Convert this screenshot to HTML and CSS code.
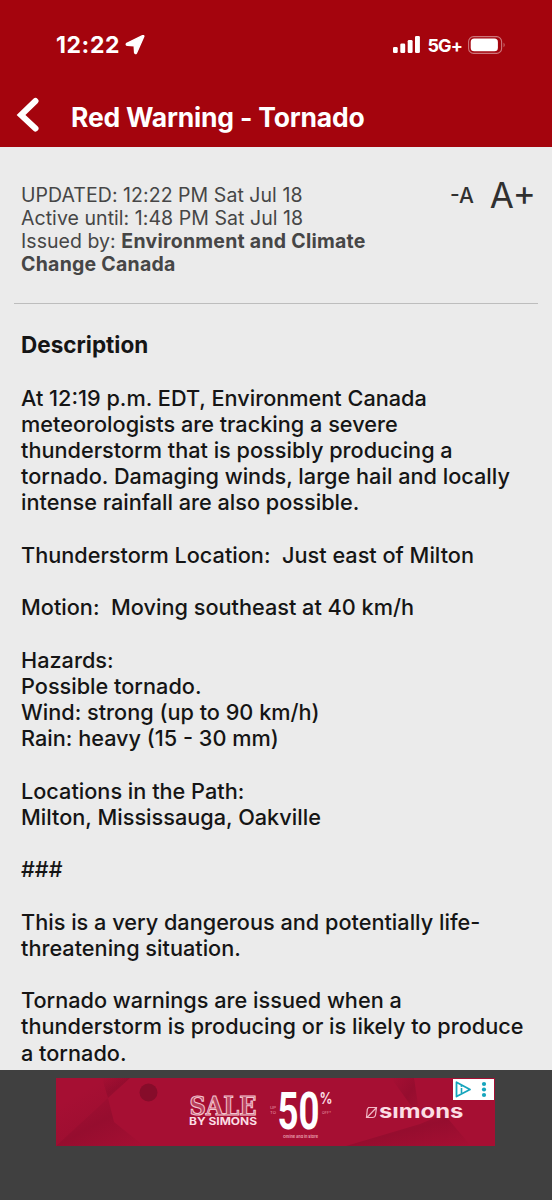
FILE: index.html
```
<!DOCTYPE html>
<html lang="en">
<head>
    <meta charset="UTF-8">
    <meta name="viewport" content="width=device-width, initial-scale=1.0">
    <title>Red Warning - Tornado</title>
    <link rel="stylesheet" href="styles.css">
</head>
<body>

<header>
    <div class="status-bar">
        <span class="time">12:22</span>
        <svg class="location" width="20" height="20" viewBox="0 0 20 20">
            <path d="M18.8 1.4 L11.5 18 Q10.2 19.5 9.6 17.5 L9.2 10.8 L2.2 10.4 Q.5 9.7 1.8 8.3 L17.5 .7 Q19 .2 18.8 1.4 Z" fill="#fff" stroke="#fff" stroke-width="1.4" stroke-linejoin="round"/>
        </svg>
        <svg class="signal" width="28" height="18" viewBox="0 0 28 18" fill="#fff">
            <rect x="0" y="11" width="4.7" height="6" rx="1.3"/>
            <rect x="7.3" y="7.5" width="4.9" height="9.5" rx="1.3"/>
            <rect x="14.7" y="4" width="4.9" height="13" rx="1.3"/>
            <rect x="22" y="0" width="4.9" height="17" rx="1.3"/>
        </svg>
        <span class="network">5G+</span>
        <svg class="battery" width="38" height="18" viewBox="0 0 38 18">
            <rect x=".6" y=".6" width="33" height="16.8" rx="5" fill="none" stroke="#fff" stroke-opacity=".45" stroke-width="1.1"/>
            <rect x="2.7" y="2.6" width="27.2" height="12.6" rx="3.5" fill="#fff"/>
            <path d="M35.6 6.5 Q37.6 9 35.6 11.3 Z" fill="#fff" fill-opacity=".5"/>
        </svg>
    </div>
    <div class="title-bar">
        <svg class="back" width="24" height="36" viewBox="0 0 24 36">
            <path d="M19.5 4 L5 18 L19.5 31.5" fill="none" stroke="#fff" stroke-width="6" stroke-linecap="round" stroke-linejoin="miter"/>
        </svg>
        <h1>Red Warning - Tornado</h1>
    </div>
</header>

<main>
    <div class="info">
        <p class="issued">
            UPDATED: 12:22 PM Sat Jul 18<br>
            Active until: 1:48 PM Sat Jul 18<br>
            Issued by: <b>Environment and Climate<br>Change Canada</b>
        </p>
        <div class="text-size">
            <span class="smaller">-A</span>
            <span class="larger">A+</span>
        </div>
    </div>

    <div class="description">
        <h2>Description</h2>
        <p>At 12:19 p.m. EDT, Environment Canada<br>
        meteorologists are tracking a severe<br>
        thunderstorm that is possibly producing a<br>
        tornado. Damaging winds, large hail and locally<br>
        intense rainfall are also possible.</p>
        <p>Thunderstorm Location:&nbsp; Just east of Milton</p>
        <p>Motion:&nbsp; Moving southeast at 40 km/h</p>
        <p>Hazards:<br>
        Possible tornado.<br>
        Wind: strong (up to 90 km/h)<br>
        Rain: heavy (15 - 30 mm)</p>
        <p>Locations in the Path:<br>
        Milton, Mississauga, Oakville</p>
        <p>###</p>
        <p>This is a very dangerous and potentially life-<br>
        threatening situation.</p>
        <p>Tornado warnings are issued when a<br>
        thunderstorm is producing or is likely to produce<br>
        a tornado.</p>
    </div>
</main>

<footer>
    <div class="ad">
        <svg width="439" height="68" viewBox="0 0 439 68">
            <defs>
                <linearGradient id="fold" x1="0" y1="0" x2="1" y2="1">
                    <stop offset="0" stop-color="#7d0a28" stop-opacity="0"/>
                    <stop offset=".5" stop-color="#7d0a28" stop-opacity=".4"/>
                    <stop offset="1" stop-color="#7d0a28" stop-opacity="0"/>
                </linearGradient>
                <linearGradient id="corner" x1="0" y1="0" x2=".6" y2="1">
                    <stop offset=".3" stop-color="#7d0a28" stop-opacity="0"/>
                    <stop offset="1" stop-color="#7d0a28" stop-opacity=".3"/>
                </linearGradient>
            </defs>
            <rect width="439" height="68" fill="#a60f33"/>
            <path d="M0 0 H74 L52 20 L0 68 Z" fill="url(#corner)"/>
            <path d="M46 0 H74 L52 20 Z" fill="url(#fold)"/>
            <path d="M0 68 L52 20 L58 44 L88 68 Z" fill="url(#fold)"/>
            <circle cx="92.5" cy="14.5" r="9" fill="#860c2a"/>
            <path d="M335 0 H358 L364 40 Z" fill="url(#fold)"/>
            <path d="M290 68 L364 46 L388 36 L415 68 Z" fill="url(#fold)"/>
            <g font-family="Inter, sans-serif" fill="#fbdde4">
                <text x="133.5" y="37" font-family="'DejaVu Serif', serif" font-weight="700" font-size="25.5" textLength="67" lengthAdjust="spacingAndGlyphs" fill="#b8405c" stroke="#f3c3ce" stroke-width="1.1">SALE</text>
                <text x="133" y="47" font-size="10.5" font-weight="700" textLength="68" lengthAdjust="spacingAndGlyphs">BY SIMONS</text>
                <g font-size="4" fill="#e79aac">
                    <text x="214" y="31" textLength="6" lengthAdjust="spacingAndGlyphs">UP</text>
                    <text x="214" y="35.5" textLength="6" lengthAdjust="spacingAndGlyphs">TO</text>
                    <text x="266" y="36" textLength="9" lengthAdjust="spacingAndGlyphs">OFF*</text>
                    <text x="227" y="59.5" font-weight="700" textLength="35" lengthAdjust="spacingAndGlyphs">Online and in store</text>
                </g>
                <text x="221.5" y="50.5" font-family="Roboto, sans-serif" font-weight="700" font-size="51" textLength="42" lengthAdjust="spacingAndGlyphs" fill="#fff">50</text>
                <text x="263.5" y="26" font-size="15.5" font-weight="700" textLength="13" lengthAdjust="spacingAndGlyphs">%</text>
                <text x="323" y="40" font-size="19" font-weight="700" textLength="84.5" lengthAdjust="spacingAndGlyphs">sımons</text>
            </g>
            <path d="M312.5 29.5 H320.5 L319.5 37 Q319 39.5 316.5 39.5 H310.5 L311.3 31.5 Z M311 39.5 L320.5 29.5" fill="none" stroke="#f0b8c5" stroke-width="1.2"/>
        </svg>
        <div class="ad-choices">
            <svg width="41" height="21" viewBox="0 0 41 21">
                <path d="M3.5 3.2 L17 10.5 L3.5 17.5 Z" fill="none" stroke="#16a5bd" stroke-width="1.8" stroke-linejoin="round"/>
                <path d="M8.5 9 V14" stroke="#16a5bd" stroke-width="1.6"/>
                <circle cx="8.5" cy="7" r="1" fill="#16a5bd"/>
                <g fill="#16a5bd">
                    <circle cx="31" cy="5" r="2.1"/>
                    <circle cx="31" cy="10.5" r="2.1"/>
                    <circle cx="31" cy="16" r="2.1"/>
                </g>
            </svg>
        </div>
    </div>
</footer>

</body>
</html>
```
FILE: styles.css
```
* {
    box-sizing: border-box;
}
body {
    margin: 0;
    height: 1200px;
    display: flex;
    flex-direction: column;
    overflow: hidden;
    font-family: Inter, "Liberation Sans", sans-serif;
    background-color: #ebebeb;
}
header {
    height: 147px;
    flex: none;
    background-color: #a4040d;
    color: white;
}
.status-bar {
    display: flex;
    align-items: center;
    height: 90px;
    padding: 0 46px 0 56px;
}
.time {
    font-size: 23px;
    font-weight: 700;
    width: 69px;
    letter-spacing: 0.6px;
}
.signal {
    margin-left: auto;
}
.network {
    margin: 0 6px 0 6px;
    font-size: 18px;
    font-weight: 700;
    letter-spacing: -0.9px;
}
.title-bar {
    display: flex;
    align-items: center;
    height: 53px;
    padding-left: 16px;
}
.back {
    margin-bottom: 3px;
}
h1 {
    margin: 0 0 0 31px;
    font-size: 26.5px;
    font-weight: 700;
    letter-spacing: -0.2px;
}
main {
    height: 923px;
    flex: none;
    overflow: hidden;
    padding: 0 14px;
}
.info {
    display: flex;
    justify-content: space-between;
    height: 157px;
    padding: 37px 2px 0 7px;
    border-bottom: 1.5px solid #bdbdbd;
}
.issued {
    margin: 0;
    font-size: 19.5px;
    line-height: 23px;
    letter-spacing: 0.05px;
    color: #464646;
}
.issued b {
    letter-spacing: 0.25px;
}
.text-size {
    display: flex;
    align-items: center;
    gap: 16px;
    height: 22px;
    color: #303030;
}
.smaller {
    font-size: 21px;
    font-weight: 500;
}
.larger {
    font-size: 35px;
}
.description {
    padding: 28px 0 0 7px;
    font-size: 21.7px;
    font-weight: 500;
    line-height: 26.2px;
    color: #151515;
}
h2 {
    margin: 0 0 26.6px;
    font-size: 22.5px;
    font-weight: 700;
    line-height: 26px;
}
.description p {
    margin: 0 0 26.2px;
    white-space: nowrap;
}
footer {
    flex: 1;
    padding: 8px 56px;
    background-color: #404040;
}
.ad {
    position: relative;
    width: 439px;
    height: 68px;
}
.ad svg {
    display: block;
}
.ad-choices {
    position: absolute;
    top: 1px;
    right: 1px;
    background-color: white;
}
```
